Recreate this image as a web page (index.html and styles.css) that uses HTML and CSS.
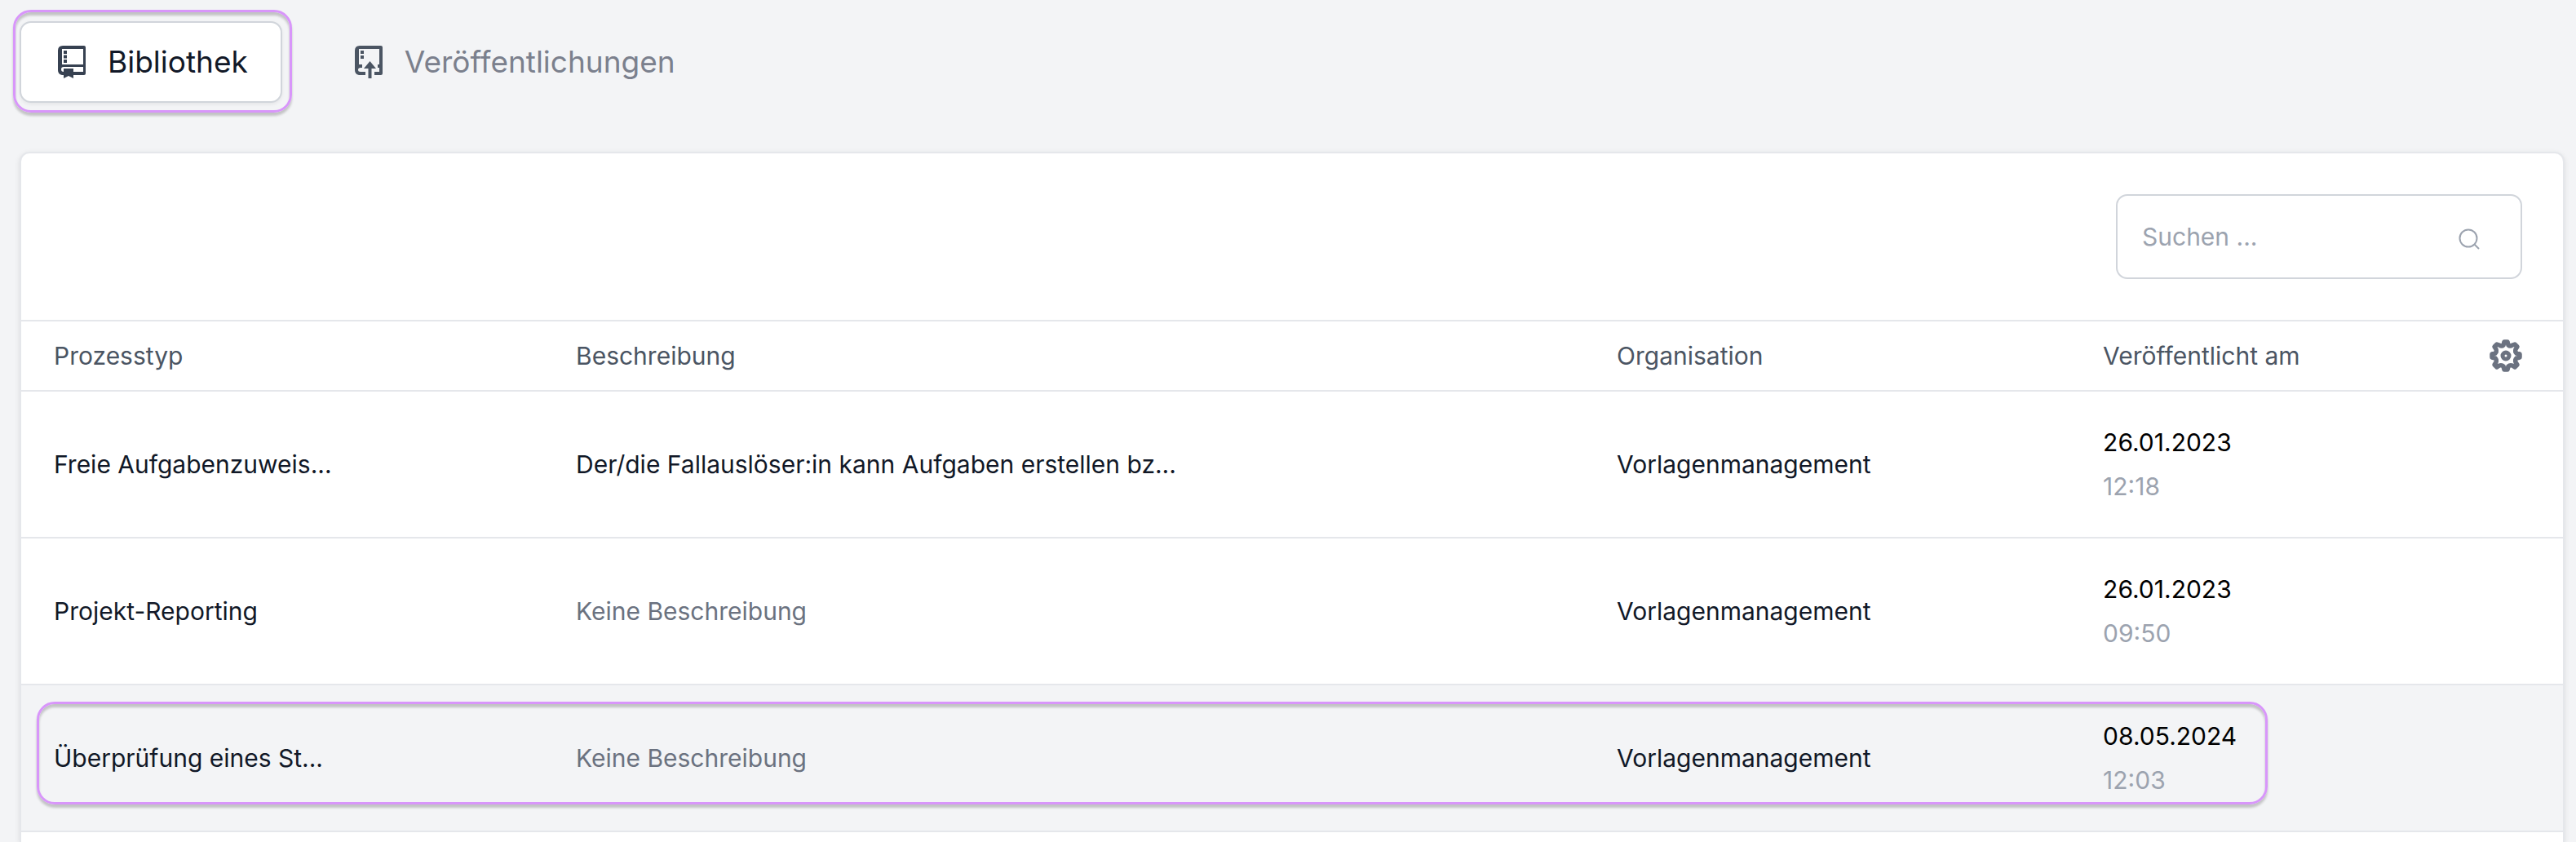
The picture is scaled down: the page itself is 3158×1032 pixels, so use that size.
FILE: index.html
```html
<!DOCTYPE html>
<html lang="de">
<head>
	<meta charset="utf-8">
	<meta name="viewport" content="width=device-width, initial-scale=1">
	<title>Bibliothek</title>
	<link rel="stylesheet" href="styles.css">
</head>
<body>
	<nav class="tabs">
		<div class="tab-frame marked">
			<button type="button" class="tab active">
				<svg class="tab-icon" viewBox="0 0 36 42" aria-hidden="true">
					<path fill="currentColor" fill-rule="evenodd" d="M7 1H33Q35 1 35 3V35Q35 37 33 37H20V41L14 38L8 41V37H6Q1 36 1 31V7Q1 1 7 1ZM6 5V24H32V5ZM8 33V29H20V33H32V27H8Q5 27 5 30Q5 33 8 33Z"/>
					<path fill="currentColor" d="M8 7h4v4H8zM8 12.500h4v4H8zM8 18h4v4H8z"/>
				</svg>
				Bibliothek
			</button>
		</div>
		<div class="tab-frame">
			<button type="button" class="tab">
				<svg class="tab-icon" viewBox="0 0 36 42" aria-hidden="true">
					<path fill="currentColor" d="M7 1H33Q35 1 35 3V35Q35 37 33 37H25V33H31V28H29V24H31V5H6V24H10V28H8Q5 28 5 30.500Q5 33 8 33H14V37H6Q1 36 1 31V7Q1 1 7 1Z"/>
					<path fill="currentColor" d="M8 7h4v4H8zM8 13h4v4H8zM19.500 20L27 29H21.500V41H17.500V29H12Z"/>
				</svg>
				Veröffentlichungen
			</button>
		</div>
	</nav>

	<main class="card">
		<div class="toolbar">
			<div class="search">
				<input type="search" placeholder="Suchen ..." aria-label="Suchen">
				<svg class="search-icon" viewBox="0 0 26 26" aria-hidden="true">
					<circle cx="12" cy="12" r="10.500" fill="none" stroke="currentColor" stroke-width="2"/>
					<path d="M19.500 19.500L25 25" fill="none" stroke="currentColor" stroke-width="2"/>
				</svg>
			</div>
		</div>

		<table class="processes">
			<thead>
				<tr>
					<th class="col-type">Prozesstyp</th>
					<th class="col-text">Beschreibung</th>
					<th class="col-org">Organisation</th>
					<th>Veröffentlicht am</th>
					<th class="col-settings">
						<button type="button" class="settings" aria-label="Einstellungen">
							<svg viewBox="0 0 40 40" aria-hidden="true">
								<path fill="none" stroke="currentColor" stroke-width="5.500" stroke-linejoin="round" d="M18 3H22L23 7Q25 9 28 7L31 6L34 9L32 12Q31 15 33 17L37 18V22L33 23Q31 25 32 28L34 31L31 34L28 32Q25 31 23 33L22 37H18L17 33Q15 31 12 32L9 34L6 31L8 28Q9 25 7 23L3 22V18L7 17Q9 15 8 12L6 9L9 6L12 7Q15 9 17 7Z"/>
								<circle cx="20" cy="20" r="4" fill="none" stroke="currentColor" stroke-width="5"/>
							</svg>
						</button>
					</th>
				</tr>
			</thead>
			<tbody>
				<tr>
					<td>Freie Aufgabenzuweis...</td>
					<td>Der/die Fallauslöser:in kann Aufgaben erstellen bz...</td>
					<td>Vorlagenmanagement</td>
					<td class="date" colspan="2">26.01.2023<span class="time">12:18</span></td>
				</tr>
				<tr>
					<td>Projekt-Reporting</td>
					<td class="empty">Keine Beschreibung</td>
					<td>Vorlagenmanagement</td>
					<td class="date" colspan="2">26.01.2023<span class="time">09:50</span></td>
				</tr>
				<tr class="selected">
					<td>Überprüfung eines St...<span class="row-marker marked"></span></td>
					<td class="empty">Keine Beschreibung</td>
					<td>Vorlagenmanagement</td>
					<td class="date" colspan="2">08.05.2024<span class="time">12:03</span></td>
				</tr>
			</tbody>
		</table>
	</main>
</body>
</html>
```
FILE: styles.css
```css
* {
	box-sizing: border-box;
}
body {
	margin: 0;
	min-height: 100vh;
	display: flex;
	flex-direction: column;
	padding: 12px 14px 0 16px;
	background-color: #f3f4f6;
	color: #111827;
	font-family: Inter, "Liberation Sans", sans-serif;
	font-size: 30px;
	line-height: 54px;
}
button,
input {
	font: inherit;
	color: inherit;
}

/* tabs */
.tabs {
	display: flex;
	gap: 22px;
	margin-bottom: 48px;
}
.tab-frame {
	padding: 11px 9px 9px 5px;
	border: 3px solid transparent;
	border-radius: 22px;
}
.marked {
	border: 3px solid #d896fa;
	border-radius: 22px;
	box-shadow: 0 4px 3px rgba(0, 0, 0, 0.2), inset 0 4px 3px rgba(0, 0, 0, 0.2);
}
.tab {
	display: flex;
	align-items: center;
	gap: 26px;
	height: 100px;
	padding: 0 40px 0 44px;
	border: 2px solid transparent;
	border-radius: 14px;
	background: none;
	color: #7b808d;
	font-size: 37px;
	cursor: pointer;
}
.tab.active {
	background-color: white;
	border-color: #d1d5db;
	color: #111827;
	box-shadow: 0 2px 4px rgba(0, 0, 0, 0.06);
}
.tab-icon {
	width: 36px;
	height: 42px;
	color: #4b5563;
}
.active .tab-icon {
	color: #374151;
}

/* card */
.card {
	flex: 1;
	margin-left: 8px;
	border: 2px solid #e5e7eb;
	border-bottom: 0;
	border-radius: 12px 12px 0 0;
	background-color: white;
	box-shadow: 0 2px 6px rgba(0, 0, 0, 0.1);
}
.toolbar {
	display: flex;
	justify-content: flex-end;
	padding: 50px;
}
.search {
	display: flex;
	align-items: center;
	width: 498px;
	height: 104px;
	padding: 0 50px 0 30px;
	border: 2px solid #d1d5db;
	border-radius: 14px;
}
.search input {
	flex: 1;
	min-width: 0;
	padding: 0;
	border: 0;
	outline: 0;
	background: none;
}
.search input::placeholder {
	color: #9ca3af;
}
.search-icon {
	width: 26px;
	height: 26px;
	margin-top: 6px;
	color: #9ca3af;
}

/* table */
.processes {
	width: 100%;
	table-layout: fixed;
	border-spacing: 0;
	text-align: left;
}
th {
	height: 88px;
	padding: 0 40px;
	border-top: 2px solid #e5e7eb;
	border-bottom: 2px solid #e5e7eb;
	color: #4b5563;
	font-weight: 400;
	white-space: nowrap;
}
td {
	height: 180px;
	padding: 0 40px;
	border-bottom: 2px solid #e5e7eb;
}
.col-type {
	width: 20.54%;
}
.col-text {
	width: 40.95%;
}
.col-org {
	width: 19.13%;
}
.col-settings {
	width: 140px;
	padding: 0 50px;
}
.settings {
	display: block;
	width: 40px;
	height: 40px;
	padding: 0;
	border: 0;
	background: none;
	color: #6b7280;
	cursor: pointer;
}
.settings svg {
	display: block;
}
.empty {
	color: #6b7280;
}
.date {
	color: black;
}
.time {
	display: block;
	color: #9ca3af;
}
.selected {
	position: relative;
	background-color: #f3f4f6;
}
/* frame over the first four columns of the row */
.row-marker {
	position: absolute;
	top: 20px;
	bottom: 34px;
	left: 19px;
	right: 362px;
	pointer-events: none;
}
```
